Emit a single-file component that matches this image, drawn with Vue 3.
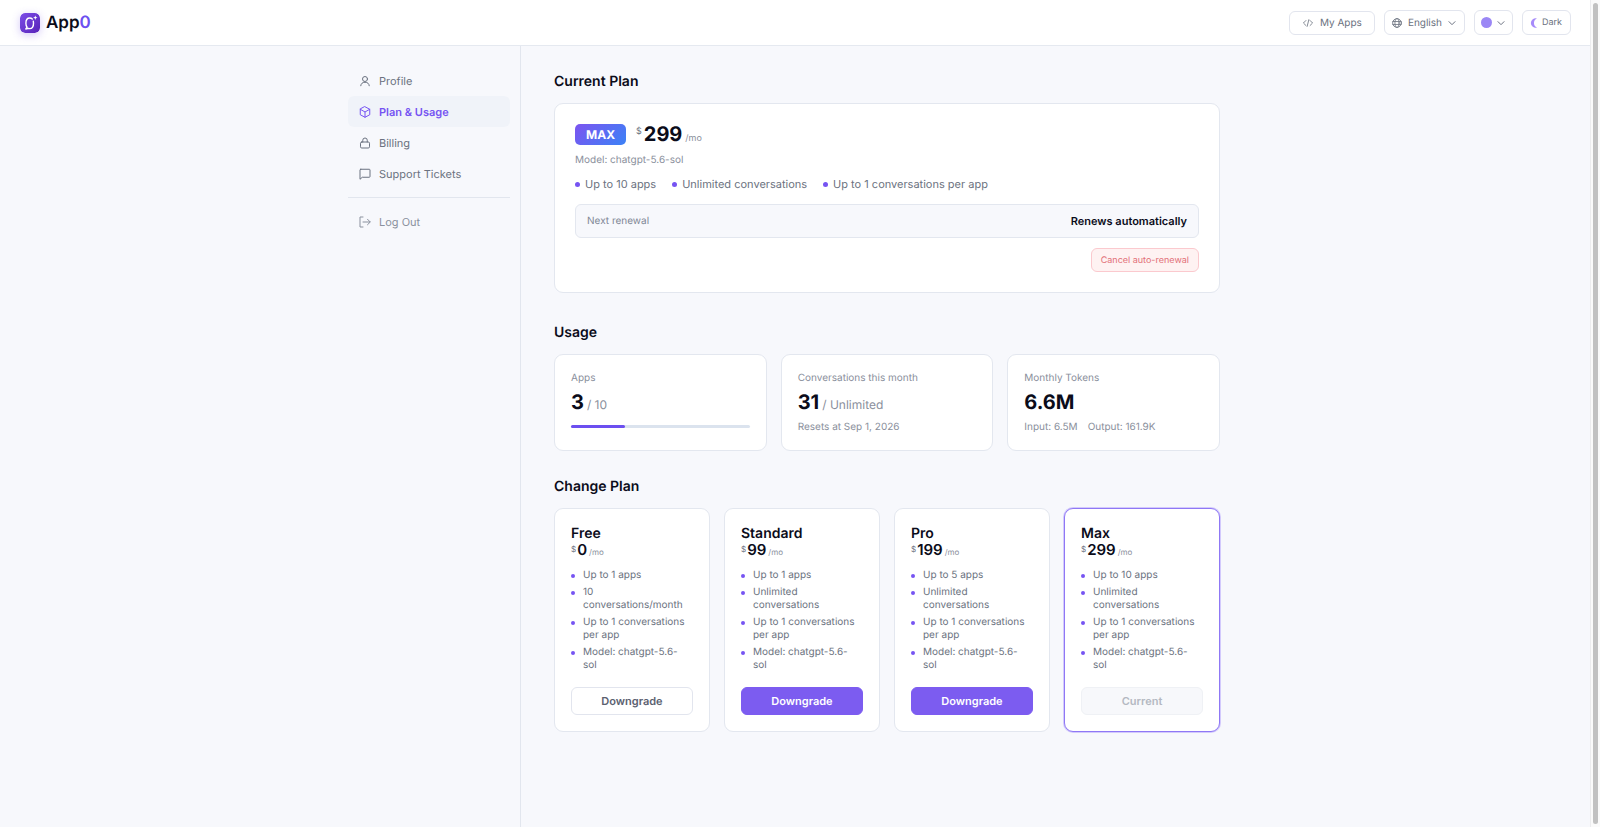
<script setup>
import { ref } from 'vue'

const language = ref('English')
const languages = ['English', 'Español', 'Français']

const features = ['Up to 10 apps', 'Unlimited conversations', 'Up to 1 conversations per app']

const plans = [
  { name: 'Free', price: 0, items: ['Up to 1 apps', '10 conversations/month', 'Up to 1 conversations per app', 'Model: chatgpt-5.6-sol'], action: 'Downgrade', kind: 'plain' },
  { name: 'Standard', price: 99, items: ['Up to 1 apps', 'Unlimited conversations', 'Up to 1 conversations per app', 'Model: chatgpt-5.6-sol'], action: 'Downgrade', kind: 'primary' },
  { name: 'Pro', price: 199, items: ['Up to 5 apps', 'Unlimited conversations', 'Up to 1 conversations per app', 'Model: chatgpt-5.6-sol'], action: 'Downgrade', kind: 'primary' },
  { name: 'Max', price: 299, items: ['Up to 10 apps', 'Unlimited conversations', 'Up to 1 conversations per app', 'Model: chatgpt-5.6-sol'], action: 'Current', kind: 'active-plan' },
]

const appsUsed = 3
const appsLimit = 10
</script>

<template>
  <div class="page">
    <div class="shell">
      <header class="topbar">
        <a class="brand" href="#">
          <svg class="logo" viewBox="0 0 20 20" aria-hidden="true">
            <defs>
              <linearGradient id="logo-fill" x1="0" y1="0" x2="1" y2="1">
                <stop offset="0" stop-color="#7d4ee8" />
                <stop offset="1" stop-color="#5722b8" />
              </linearGradient>
            </defs>
            <rect width="20" height="20" rx="5" fill="url(#logo-fill)" />
            <path d="M12.300 6C11.600 5.300 10.700 5 9.700 5C7.300 5 5.900 7.100 5.900 10.200C5.900 12 6.300 13.400 7.100 14.300L5.800 16L8.600 15.400C9 15.500 9.300 15.600 9.700 15.600C12.100 15.600 13.500 13.300 13.500 10.200C13.500 9.500 13.400 8.900 13.300 8.300" fill="none" stroke="#fff" stroke-width="1.400" stroke-linecap="round" stroke-linejoin="round" />
            <path d="M15.300 2.400L15.900 4.100L17.500 4.700L15.900 5.300L15.300 7L14.700 5.300L13.100 4.700L14.700 4.100Z" fill="#fff" />
          </svg>
          <span class="wordmark">App<span class="accent">0</span></span>
        </a>
        <nav class="tools" aria-label="Toolbar">
          <a class="tool apps" href="#">
            <svg class="icon i10" viewBox="0 0 24 24" aria-hidden="true"><path d="M7 6L1 12L7 18M17 6L23 12L17 18M14 4L10 20" /></svg>
            <span>My Apps</span>
          </a>
          <label class="tool lang">
            <svg class="icon i10" viewBox="0 0 24 24" aria-hidden="true"><circle cx="12" cy="12" r="10.500" /><ellipse cx="12" cy="12" rx="5" ry="10.500" /><path d="M2 8.500H22M2 15.500H22" /></svg>
            <select v-model="language" aria-label="Language">
              <option v-for="l in languages" :key="l">{{ l }}</option>
            </select>
            <svg class="icon i8" viewBox="0 0 24 24" aria-hidden="true"><path d="M3 8L12 17L21 8" /></svg>
          </label>
          <button class="tool color" type="button" aria-label="Accent colour">
            <span class="swatch"></span>
            <svg class="icon i8" viewBox="0 0 24 24" aria-hidden="true"><path d="M3 8L12 17L21 8" /></svg>
          </button>
          <button class="tool theme" type="button">
            <svg class="moon" viewBox="0 0 8 12" aria-hidden="true"><path d="M7 1.400A4.800 4.800 0 1 0 7 10.600A5 5 0 0 1 7 1.400Z" /></svg>
            <span>Dark</span>
          </button>
        </nav>
      </header>

      <div class="body">
        <nav class="side" aria-label="Account">
          <a class="link" href="#">
            <svg class="icon i12" viewBox="0 0 24 24" aria-hidden="true"><circle cx="12" cy="8" r="5" /><path d="M3.500 21.500C4 17 7 14.500 12 14.500S20 17 20.500 21.500" /></svg>
            <span>Profile</span>
          </a>
          <a class="link active" href="#" aria-current="page">
            <svg class="icon i12" viewBox="0 0 24 24" aria-hidden="true"><path d="M12 1.500L21.500 6.500V17.500L12 22.500L2.500 17.500V6.500ZM2.500 6.500L12 12L21.500 6.500M12 12V22.500" /></svg>
            <span>Plan &amp; Usage</span>
          </a>
          <a class="link" href="#">
            <svg class="icon i12" viewBox="0 0 24 24" aria-hidden="true"><rect x="3" y="10" width="18" height="12" rx="2.500" /><path d="M7.500 10V6.500A4.500 4.500 0 0 1 16.500 6.500V10" /></svg>
            <span>Billing</span>
          </a>
          <a class="link" href="#">
            <svg class="icon i12" viewBox="0 0 24 24" aria-hidden="true"><path d="M3.500 2.500H20.500A1.500 1.500 0 0 1 22 4V17A1.500 1.500 0 0 1 20.500 18.500H6.500L2 22.500V4A1.500 1.500 0 0 1 3.500 2.500Z" /></svg>
            <span>Support Tickets</span>
          </a>
          <hr />
          <a class="link out" href="#">
            <svg class="icon i12" viewBox="0 0 24 24" aria-hidden="true"><path d="M8 2H2V22H8M8 12H22M17 6.500L22.500 12L17 17.500" /></svg>
            <span>Log Out</span>
          </a>
        </nav>

        <main class="main">
          <section>
            <h2>Current Plan</h2>
            <div class="card current">
              <div class="headline">
                <span class="badge">MAX</span>
                <span class="price big"><span class="cur">$</span><span class="num">299</span><span class="per">/mo</span></span>
              </div>
              <p class="model">Model: chatgpt-5.6-sol</p>
              <ul class="features">
                <li v-for="f in features" :key="f">{{ f }}</li>
              </ul>
              <div class="renewal">
                <span>Next renewal</span>
                <strong>Renews automatically</strong>
              </div>
              <button class="cancel" type="button">Cancel auto-renewal</button>
            </div>
          </section>

          <section>
            <h2>Usage</h2>
            <div class="stats">
              <div class="card stat">
                <p class="label">Apps</p>
                <p class="value"><b>{{ appsUsed }}</b><span>/ {{ appsLimit }}</span></p>
                <div class="track"><div class="fill" :style="{ width: (appsUsed / appsLimit) * 100 + '%' }"></div></div>
              </div>
              <div class="card stat">
                <p class="label">Conversations this month</p>
                <p class="value"><b>31</b><span>/ Unlimited</span></p>
                <p class="note">Resets at Sep 1, 2026</p>
              </div>
              <div class="card stat">
                <p class="label">Monthly Tokens</p>
                <p class="value"><b>6.6M</b></p>
                <p class="note"><span>Input: 6.5M</span><span>Output: 161.9K</span></p>
              </div>
            </div>
          </section>

          <section>
            <h2>Change Plan</h2>
            <div class="plans">
              <article v-for="p in plans" :key="p.name" class="card plan" :class="{ selected: p.kind === 'active-plan' }">
                <h3>{{ p.name }}</h3>
                <span class="price small"><span class="cur">$</span><span class="num">{{ p.price }}</span><span class="per">/mo</span></span>
                <ul>
                  <li v-for="i in p.items" :key="i">{{ i }}</li>
                </ul>
                <button type="button" :class="p.kind" :disabled="p.kind === 'active-plan'">{{ p.action }}</button>
              </article>
            </div>
          </section>
        </main>
      </div>
    </div>
    <div class="rail" aria-hidden="true"><div class="thumb"></div></div>
  </div>
</template>

<style>
body {
  background: #f7f8fc;
}
</style>

<style scoped>
* {
  box-sizing: border-box;
}
.page {
  display: flex;
  min-height: 100vh;
  font-family: Inter, "Liberation Sans", sans-serif;
  font-size: 11px;
  text-rendering: geometricPrecision;
  color: #6b7280;
  background: #f7f8fc;
}
.shell {
  flex: 1;
  display: flex;
  flex-direction: column;
}
.rail {
  width: 10px;
  padding: 3px 2px;
  background: #fafafa;
  border-left: 1px solid #ececee;
  display: flex;
}
.thumb {
  flex: 1;
  border-radius: 3px;
  background: #c1c1c1;
}
h2, h3, p, ul {
  margin: 0;
  padding: 0;
}
ul {
  list-style: none;
}
a {
  color: inherit;
  text-decoration: none;
}
button, select {
  font: inherit;
  color: inherit;
  text-rendering: inherit;
  cursor: pointer;
}
.icon {
  flex: none;
  fill: none;
  stroke: currentColor;
  stroke-width: 2;
  stroke-linecap: round;
  stroke-linejoin: round;
}
.i8 { width: 8px; height: 8px; stroke-width: 3; }
.i10 { width: 10px; height: 10px; }
.i12 { width: 12px; height: 12px; }

.topbar {
  display: flex;
  align-items: center;
  justify-content: space-between;
  height: 46px;
  padding: 0 19px 0 20px;
  background: #fff;
  border-bottom: 1px solid #e5e9f0;
}
.brand {
  display: flex;
  align-items: center;
  gap: 6px;
}
.logo {
  width: 20px;
  height: 20px;
  border-radius: 5px;
  box-shadow: 0 2px 8px rgba(109, 74, 230, 0.3);
}
.wordmark {
  font-size: 17px;
  line-height: 22px;
  font-weight: 600;
  color: #0b0c1a;
}
.accent {
  color: #6c4ff0;
}
.tools {
  display: flex;
  align-items: center;
  gap: 9px;
}
.tool {
  display: flex;
  align-items: center;
  height: 25px;
  background: #fff;
  border: 1px solid #e2e5ee;
  border-radius: 6px;
}
.apps {
  height: 24px;
  padding: 0 12px 0 13px;
  gap: 7px;
  font-size: 10px;
}
.lang {
  gap: 6px;
  padding: 0 8px 0 7px;
  font-size: 10px;
}
.lang select {
  appearance: none;
  field-sizing: content;
  padding: 0;
  border: 0;
  background: none;
}
.color {
  gap: 5px;
  padding: 0 7px 0 6px;
}
.swatch {
  width: 11px;
  height: 11px;
  border-radius: 50%;
  background: #9b87f5;
}
.theme {
  gap: 4px;
  padding: 0 8px 0 7px;
  font-size: 9px;
}
.moon {
  width: 8px;
  height: 12px;
  fill: #a78bfa;
}

.body {
  flex: 1;
  display: flex;
  width: 100%;
  max-width: 910px;
  margin: 0 auto;
}
.side {
  width: 181px;
  padding: 19px 10px 20px 8px;
  border-right: 1px solid #e2e6ee;
}
.link {
  display: flex;
  align-items: center;
  gap: 8px;
  height: 31px;
  padding: 0 11px;
  line-height: 14px;
  border-radius: 6px;
}
.active {
  background: #f0f3f9;
  color: #7654f2;
  font-weight: 600;
}
.side hr {
  height: 1px;
  margin: 8px 0;
  border: 0;
  background: #e2e6ee;
}
.out {
  color: #8a919e;
}

.main {
  flex: 1;
  padding: 26px 30px 30px 33px;
}
h2 {
  margin-bottom: 11px;
  font-size: 14px;
  line-height: 20px;
  font-weight: 600;
  color: #0b0c1a;
}
.card {
  background: #fff;
  border: 1px solid #e3e7ef;
  border-radius: 9px;
}
.current {
  display: flex;
  flex-direction: column;
  padding: 20px;
  margin-bottom: 30px;
}
.headline {
  display: flex;
  align-items: center;
  gap: 10px;
  height: 21px;
}
.badge {
  padding: 0 11px;
  line-height: 21px;
  border-radius: 5px;
  font-size: 12px;
  font-weight: 700;
  color: #fff;
  background: linear-gradient(135deg, #7c54f0, #3b82f6);
}
.price {
  display: flex;
  align-items: baseline;
  color: #8a8f9c;
}
.price .num {
  font-weight: 700;
  color: #0b0c1a;
}
.price .cur {
  align-self: flex-start;
  color: #6b7280;
}
.big .num {
  margin: 0 3px 0 2px;
  font-size: 20px;
  line-height: 21px;
}
.big .cur, .big .per {
  font-size: 9px;
  line-height: 15px;
}
.small .num {
  margin: 0 2px 0 1px;
  font-size: 15px;
  line-height: 16px;
  font-weight: 600;
}
.small .cur, .small .per {
  font-size: 8px;
  line-height: 14px;
}
.model {
  margin-top: 7px;
  font-size: 10px;
  line-height: 16px;
  color: #8a8f9c;
}
.features {
  display: flex;
  gap: 16px;
  margin-top: 8px;
  line-height: 16px;
}
.features li {
  display: flex;
  align-items: center;
  gap: 5px;
}
.features li::before {
  content: "";
  width: 5px;
  height: 5px;
  border-radius: 50%;
  background: #7654f2;
}
.renewal {
  display: flex;
  align-items: center;
  justify-content: space-between;
  height: 34px;
  margin: 12px 0 10px;
  padding: 0 11px;
  border: 1px solid #e3e7ef;
  border-radius: 6px;
  background: #f7f8fc;
  color: #7f8796;
}
.renewal span {
  font-size: 10px;
}
.renewal strong {
  font-weight: 600;
  color: #0b0c1a;
}
.cancel {
  align-self: flex-end;
  height: 24px;
  padding: 0 9px;
  border: 1px solid #fbc9ce;
  border-radius: 6px;
  background: #fef2f2;
  font-size: 9px;
  color: #e27078;
}

.stats {
  display: grid;
  grid-template-columns: repeat(3, 1fr);
  gap: 14px;
  margin-bottom: 26px;
}
.stat {
  padding: 16px;
  color: #8a8f9c;
}
.label {
  font-size: 10px;
  line-height: 14px;
}
.value {
  display: flex;
  align-items: baseline;
  gap: 3px;
  height: 26px;
  margin-top: 5px;
  font-size: 12px;
  line-height: 25px;
}
.value b {
  font-size: 20px;
  color: #0b0c1a;
}
.track {
  height: 3px;
  margin-top: 9px;
  border-radius: 2px;
  background: #dbe3ee;
}
.fill {
  height: 3px;
  border-radius: 2px;
  background: #6c4ff0;
}
.note {
  display: flex;
  gap: 10px;
  margin-top: 5px;
  font-size: 10px;
  line-height: 13px;
}

.plans {
  display: grid;
  grid-template-columns: repeat(4, 1fr);
  gap: 14px;
}
.plan {
  display: flex;
  flex-direction: column;
  padding: 16px;
}
.selected {
  border-color: #8f78f5;
  box-shadow: 0 0 0 1px #d3cafc;
}
h3 {
  font-size: 14px;
  line-height: 17px;
  font-weight: 600;
  color: #0b0c1a;
}
.plan ul {
  display: grid;
  gap: 4px;
  margin: 10px 0 15px;
  padding-right: 4px;
  font-size: 10px;
  line-height: 13px;
}
.plan li {
  display: flex;
  gap: 8px;
}
.plan li::before {
  content: "";
  flex: none;
  width: 4px;
  height: 4px;
  margin-top: 5px;
  border-radius: 50%;
  background: #7654f2;
}
.plan button {
  height: 28px;
  border: 1px solid #e2e5ee;
  border-radius: 6px;
  background: #fff;
  font-weight: 600;
  color: #5b6170;
}
.plan .primary {
  border-color: #7c5cf0;
  background: #7c5cf0;
  color: #fff;
}
.plan .active-plan {
  background: #f7f8fb;
  border-color: #eff1f5;
  color: #b4b8c2;
  cursor: default;
}
</style>
